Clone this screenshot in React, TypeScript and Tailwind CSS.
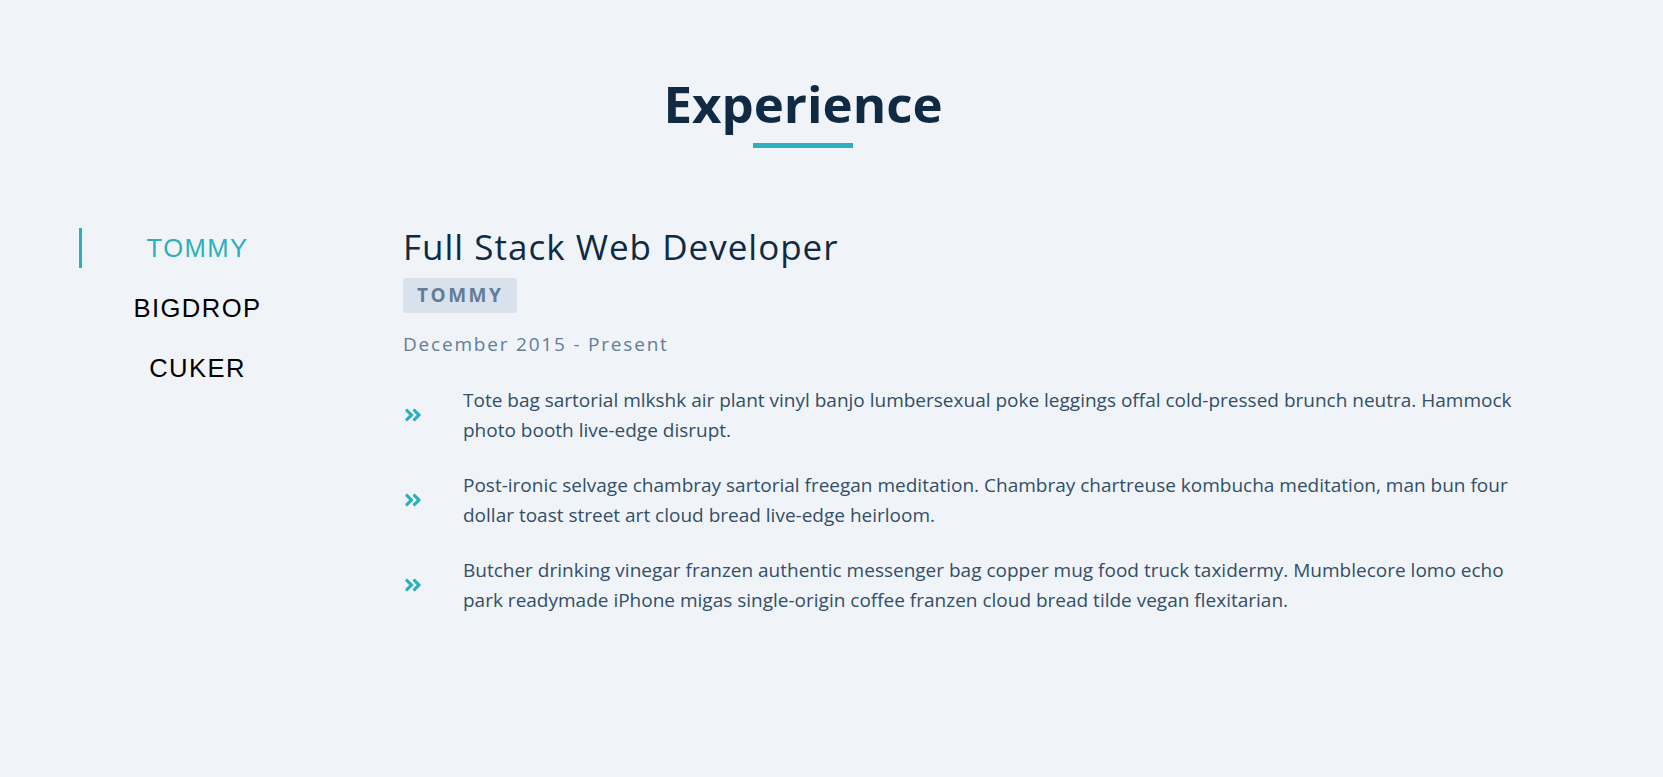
import { useState } from "react";
import { FaAngleDoubleRight } from "react-icons/fa";

type Job = {
  company: string;
  title: string;
  range: string;
  duties: string[];
};

const JOBS: Job[] = [
  {
    company: "TOMMY",
    title: "Full Stack Web Developer",
    range: "December 2015 - Present",
    duties: [
      "Tote bag sartorial mlkshk air plant vinyl banjo lumbersexual poke leggings offal cold-pressed brunch neutra. Hammock photo booth live-edge disrupt.",
      "Post-ironic selvage chambray sartorial freegan meditation. Chambray chartreuse kombucha meditation, man bun four dollar toast street art cloud bread live-edge heirloom.",
      "Butcher drinking vinegar franzen authentic messenger bag copper mug food truck taxidermy. Mumblecore lomo echo park readymade iPhone migas single-origin coffee franzen cloud bread tilde vegan flexitarian.",
    ],
  },
  {
    company: "BIGDROP",
    title: "Front-End Engineer",
    range: "May 2015 - December 2015",
    duties: [
      "Hashtag drinking vinegar scenester mumblecore snackwave four dollar toast, lumbersexual XOXO. Cardigan church-key pabst, biodiesel vexillologist viral squid.",
    ],
  },
  {
    company: "CUKER",
    title: "Engineering Intern",
    range: "May 2014 - September 2015",
    duties: [
      "I'm baby woke mlkshk wolf bitters live-edge blue bottle, hammock freegan copper mug whatever cold-pressed.",
    ],
  },
];

export default function App() {
  const [active, setActive] = useState(0);
  const job = JOBS[active];

  return (
    <div className="min-h-screen bg-[#f0f4f8] font-['Open_Sans',sans-serif] pb-20">
      <section className="pt-[78px] pr-[57px]">
        <div className="mx-auto w-[1448px]">
          <h2 className="text-center text-[51px] leading-none font-bold text-[#102a43]">
            Experience
          </h2>
          <div className="mx-auto mt-[14px] h-[5px] w-[100px] bg-[#2cb1bc]" />

          <div className="mt-[80px] flex">
            <nav className="flex w-[234px] flex-col gap-5">
              {JOBS.map((j, i) => (
                <button
                  key={j.company}
                  onClick={() => setActive(i)}
                  className={`flex h-10 items-center justify-center border-l-[3px] font-['Liberation_Sans',Arial,sans-serif] text-[25.6px] tracking-[1.4px] ${
                    i === active
                      ? "border-[#2cb1bc] text-[#2cb1bc]"
                      : "border-transparent text-black"
                  }`}
                >
                  {j.company}
                </button>
              ))}
            </nav>

            <article className="ml-[90px] flex-1">
              <h3 className="pt-px text-[35px] leading-[36px] font-normal tracking-[1px] text-[#102a43]">
                {job.title}
              </h3>
              <div className="mt-[13px] flex h-[35px] w-fit items-center rounded bg-[#d9e2ec] px-[14px] text-[19px] font-bold tracking-[2.5px] text-[#627d98]">
                {job.company}
              </div>
              <p className="mt-[19px] text-[19px] leading-[24px] tracking-[1.8px] text-[#627d98]">
                {job.range}
              </p>
              <ul className="mt-[29px] flex flex-col gap-[25px]">
                {job.duties.map((d) => (
                  <li key={d} className="flex items-center">
                    <span className="w-[60px] shrink-0 text-[#2cb1bc]">
                      <FaAngleDoubleRight size={20} />
                    </span>
                    <span className="text-[19px] leading-[30px] text-[#334e68]">
                      {d}
                    </span>
                  </li>
                ))}
              </ul>
            </article>
          </div>
        </div>
      </section>
    </div>
  );
}
